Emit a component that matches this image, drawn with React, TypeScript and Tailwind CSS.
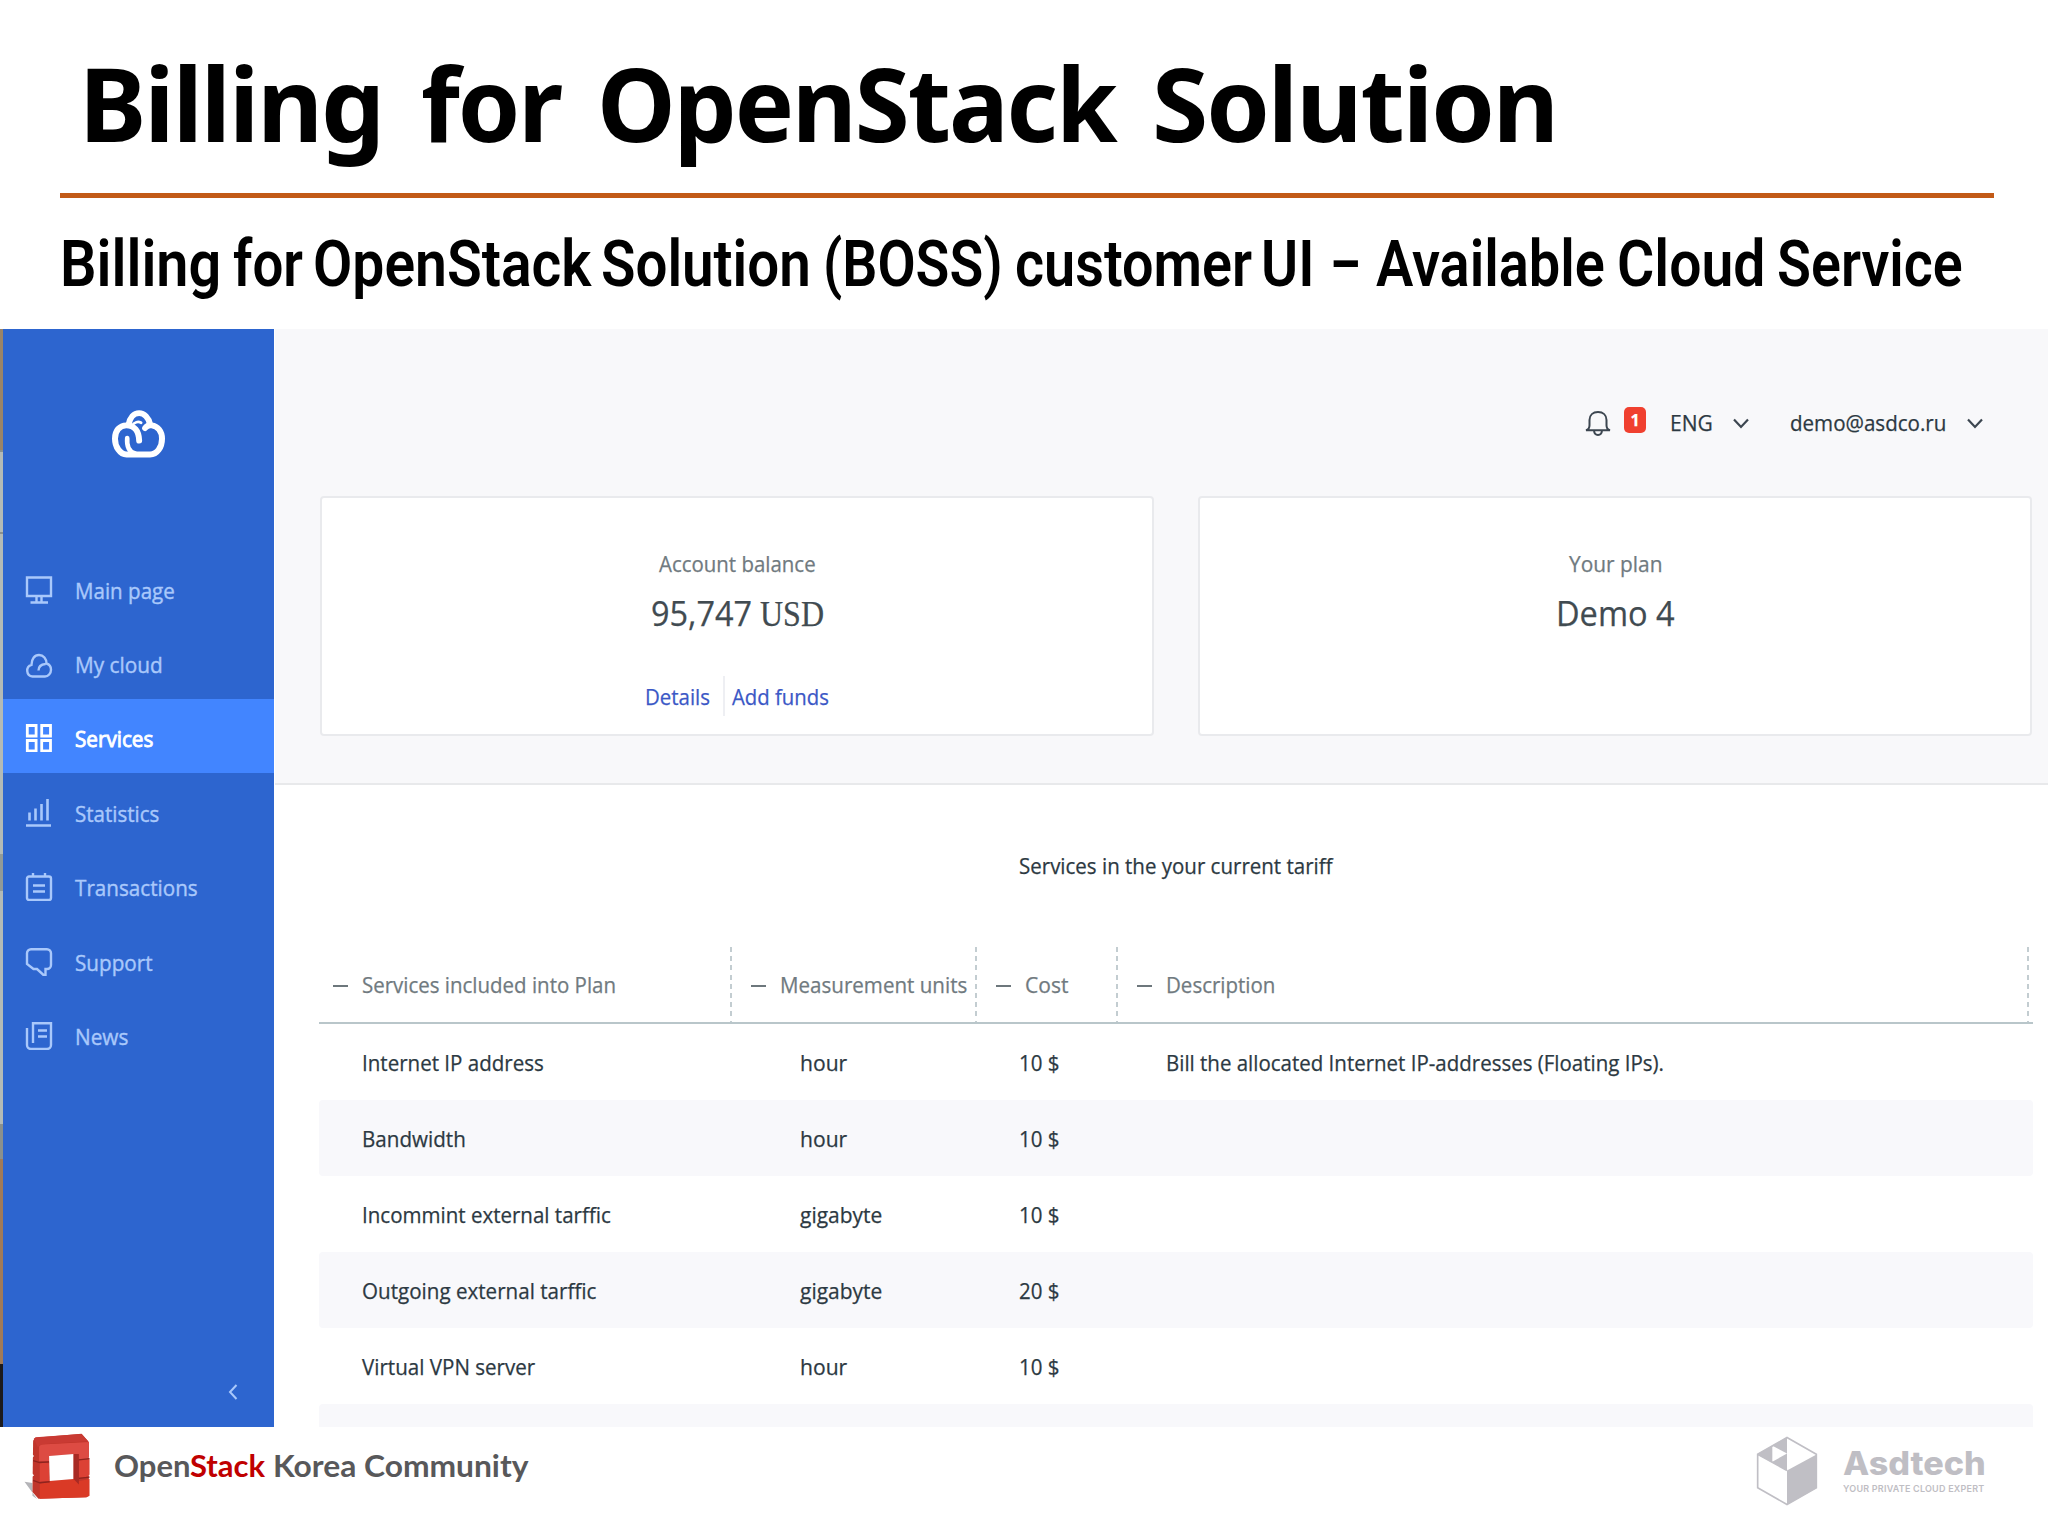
import { ReactNode, useLayoutEffect, useRef, useState } from "react";

// one line of text squeezed or stretched to a fixed width
function Fit({ w, className = "", children }: { w: number; className?: string; children: ReactNode }) {
  const ref = useRef<HTMLSpanElement>(null);
  const [scale, setScale] = useState(1);

  useLayoutEffect(() => {
    if (ref.current) setScale(w / ref.current.offsetWidth);
  }, [w]);

  return (
    <span className={`block whitespace-nowrap ${className}`} style={{ width: w }}>
      <span ref={ref} className="inline-block origin-left" style={{ transform: `scaleX(${scale})` }}>
        {children}
      </span>
    </span>
  );
}

const iconCls = "h-7 w-7 shrink-0 fill-none stroke-current stroke-[2.4]";

const icons = {
  main: (
    <svg viewBox="0 0 28 28" className={iconCls}>
      <path d="M2 1.500h24v18.500H2zM11.500 20v6M16.500 20v6M5.500 26.500h17.500" />
    </svg>
  ),
  cloud: (
    <svg viewBox="0 0 28 28" className={iconCls}>
      <path d="M7.500 26.500a6 6 0 0 1-1-11.700C6.500 9 9.500 5 14 5s7.500 4 7.500 8.500c2.800.8 4.500 3.300 4.500 6.300 0 3.700-2.800 6.700-6 6.700zM13.500 20.500c0-3.500 2.500-6 7-6.500" />
    </svg>
  ),
  services: (
    <svg viewBox="0 0 28 28" className="h-7 w-7 shrink-0 fill-none stroke-current stroke-[2.8]">
      <path d="M2.300 1.500h8.800v10.500H2.300zM16.700 1.500h8.800v10.500H16.700zM2.300 16.500h8.800v10.300H2.300zM16.700 16.500h8.800v10.300H16.700z" />
    </svg>
  ),
  statistics: (
    <svg viewBox="0 0 28 28" className="h-7 w-7 shrink-0 fill-none stroke-current stroke-[2.6]">
      <path d="M4.500 21.500v-8M10.500 21.500v-12M16.500 21.500V5M22.500 21.500V0M1 26.500h25" />
    </svg>
  ),
  transactions: (
    <svg viewBox="0 0 28 28" className={iconCls}>
      <rect x="2" y="3.500" width="24" height="23.500" rx="2" />
      <path d="M8 0v4M20 0v4M8 12.500h12M8 18.500h12" />
    </svg>
  ),
  support: (
    <svg viewBox="0 0 28 28" className={iconCls}>
      <path d="M6 1.200h16a4 4 0 0 1 4 4V17a4 4 0 0 1-4 4h-1.500v6h-2L12 21H8.500L2 16V5.200a4 4 0 0 1 4-4z" />
    </svg>
  ),
  news: (
    <svg viewBox="0 0 28 28" className={iconCls}>
      <path d="M8 21V1.200h18V23a4 4 0 0 1-4 4H6a4 4 0 0 1-4-4V6M13 8.500h9M13 14.500h9" />
    </svg>
  ),
};

const subtitle = [
  { text: "Billing", w: 161, cls: "" },
  { text: "for", w: 70, cls: "ml-[12px]" },
  { text: "OpenStack", w: 278, cls: "ml-[10px]" },
  { text: "Solution", w: 210, cls: "ml-[10px]" },
  { text: "(BOSS)", w: 180, cls: "ml-[12px]" },
  { text: "customer", w: 237, cls: "ml-[12px]" },
  { text: "UI", w: 53, cls: "ml-[9px]" },
  { text: "–", w: 31, cls: "ml-[16px]" },
  { text: "Available", w: 229, cls: "ml-[15px]" },
  { text: "Cloud", w: 148, cls: "ml-[12px]" },
  { text: "Service", w: 186, cls: "ml-[12px]" },
];

const menu = [
  { icon: icons.main, label: "Main page", w: 100 },
  { icon: icons.cloud, label: "My cloud", w: 88 },
  { icon: icons.services, label: "Services", w: 78, active: true },
  { icon: icons.statistics, label: "Statistics", w: 84 },
  { icon: icons.transactions, label: "Transactions", w: 123 },
  { icon: icons.support, label: "Support", w: 78 },
  { icon: icons.news, label: "News", w: 53 },
];

const columns = [
  { label: "Services included into Plan", w: 254, cls: "w-[412px]" },
  { label: "Measurement units", w: 187, cls: "w-[245px] pl-[20px]" },
  { label: "Cost", w: 43, cls: "w-[141px] pl-[20px]" },
  { label: "Description", w: 109, cls: "w-[911px] pl-[20px]" },
];

const rows = [
  { name: "Internet IP address", nameW: 182, unit: "hour", cost: "10 $", text: "Bill the allocated Internet IP-addresses (Floating IPs)." },
  { name: "Bandwidth", nameW: 104, unit: "hour", cost: "10 $" },
  { name: "Incommint external tarffic", nameW: 249, unit: "gigabyte", cost: "10 $" },
  { name: "Outgoing external tarffic", nameW: 234, unit: "gigabyte", cost: "20 $" },
  { name: "Virtual VPN server", nameW: 173, unit: "hour", cost: "10 $" },
];

function Chevron() {
  return (
    <svg viewBox="0 0 18 12" className="h-3 w-[18px] fill-none stroke-[#3c4650] stroke-[2.2]">
      <path d="M2 2.500L9 10l7-7.500" />
    </svg>
  );
}

function CloudLogo() {
  return (
    <svg
      viewBox="36 30 160 144"
      className="h-[48px] w-[53px] fill-none stroke-white stroke-[18]"
      strokeLinecap="round"
      strokeLinejoin="round"
    >
      <path d="M136 84C143 75 152 75 156 76c18 2 31 18 31 40 0 26-15 48-36 48H80c-20 0-35-24-35-48 0-24 14-40 34-40 24 0 38 16 39 46" />
      <path d="M86 74c4-21 16-35 32-35 15 0 29 14 33 34" />
      <path d="M82 114c-2 24 6 42 24 47" strokeWidth="14" />
      <path d="M97 76c6-10 18-13 27-8" strokeWidth="8" />
    </svg>
  );
}

function OpenStackLogo() {
  return (
    <svg viewBox="40 25 210 205" className="ml-[23px] mt-[6px] h-[68px] w-[70px]">
      <path d="M44 172l24 4v38l14 10z" fill="#b4b4b8" />
      <path d="M70 48l6-9 140-12 22 25v160l-8 7-144 4-18-20z" fill="#c0352b" />
      <path d="M88 66q2-5 8-6l142-8v52H194V88l-74 6v16H88z" fill="#dd4b43" />
      <path d="M72 42l6-4 138-10 20 22-140 9-12 8z" fill="#c93a33" />
      <path d="M90 114l28 2v54l-28 2zM208 106l32-2v52l-32 4z" fill="#dc4135" />
      <path d="M90 178l30-8 72-6 18 6 30-6v50l-8 5-142 4z" fill="#da3a26" />
      <path d="M118 94l74-6v76l-72 6z" fill="#fff" />
      <path d="M192 88l16 0v92l-16-16z" fill="#a82a24" />
      <path d="M70 108l20 6 28-2M70 168l20 7 30-3M208 106l32-4M208 162l32-4" className="fill-none stroke-[#8e231e] stroke-[4]" />
      <path d="M66 88l7 6-7 6zM66 146l7 6-7 6zM244 92l-7 6 7 4zM244 148l-7 6 7 4z" fill="#fff" />
    </svg>
  );
}

function AsdtechLogo() {
  return (
    <svg viewBox="168 108 186 209" className="h-[70px] w-[62px]">
      <path d="M171 162l90-51v100z" fill="#c0bfc5" />
      <path d="M217 137l44 23-44 25z" fill="#fff" />
      <path d="M261 211l90-49v101l-90 51z" fill="#c0bfc5" />
      <path d="M173 162l88-50 88 50v101l-88 50-88-50zl88 49" className="fill-none stroke-[#c0bfc5] stroke-[5]" />
    </svg>
  );
}

function Sidebar() {
  return (
    <aside className="flex w-[271px] flex-col bg-[#2d65cf]">
      <div className="flex h-[221px] justify-center pt-[81px]">
        <CloudLogo />
      </div>
      <nav className="flex flex-col text-[#a9c8fb] [-webkit-text-stroke:0.4px]">
        {menu.map((m) => (
          <div
            key={m.label}
            className={`flex h-[74.400px] items-center gap-[22px] pl-[22px] pt-[5px] ${m.active ? "bg-[#4285ff] text-white" : ""}`}
          >
            {m.icon}
            <Fit w={m.w} className={m.active ? "[-webkit-text-stroke:0.9px]" : ""}>
              {m.label}
            </Fit>
          </div>
        ))}
      </nav>
      <svg viewBox="0 0 10 16" className="mt-auto mb-[27px] ml-[225px] h-4 w-[10px] fill-none stroke-[#a9c8fb] stroke-2">
        <path d="M8.500 1L2 8l6.500 7" />
      </svg>
    </aside>
  );
}

function Summary() {
  return (
    <div className="h-[456px] border-b-2 border-[#e8e9eb] bg-[#f8f8fa]">
      <div className="flex h-[167px] items-center pl-[1310px] pt-[20px]">
        <svg viewBox="0 0 26 26" className="h-[26px] w-[26px] fill-none stroke-[#3c4650] stroke-2">
          <path d="M1 20.200c2.500-.7 3.500-2.500 3.500-5V10C4.500 5 8 2 13 2s8.500 3 8.500 8v5.200c0 2.500 1 4.300 3.500 5zM9 20.500c.5 6 7.500 6 8 0" />
        </svg>
        <span className="-mt-[5px] ml-[13px] flex h-[26px] w-[22px] items-center justify-center rounded-[5px] bg-[#f0402f] text-base font-bold text-white">
          1
        </span>
        <Fit w={43} className="-mt-px ml-[24px]">ENG</Fit>
        <div className="ml-[19px]"><Chevron /></div>
        <Fit w={156} className="-mt-px ml-10">demo@asdco.ru</Fit>
        <div className="ml-[20px]"><Chevron /></div>
      </div>
      <div className="flex gap-[44px] pl-[45px]">
        <div className="flex h-[240px] w-[834px] flex-col items-center rounded border-2 border-[#e9eaed] bg-white pt-[50px]">
          <Fit w={157} className="text-[#707a80]">Account balance</Fit>
          <div className="mt-[12px] flex items-baseline gap-[8px] text-[35px] leading-[46px] text-[#414b51]">
            <Fit w={101}>95,747</Fit>
            <Fit w={64} className="font-['Liberation_Serif',serif] text-[36px]">USD</Fit>
          </div>
          <div className="mt-[43px] flex items-center text-[#3b58c6]">
            <Fit w={65}>Details</Fit>
            <span className="ml-[13px] mr-[7px] -my-1 h-10 w-[2px] bg-[#eeeff3]" />
            <Fit w={97}>Add funds</Fit>
          </div>
        </div>
        <div className="flex h-[240px] w-[834px] flex-col items-center rounded border-2 border-[#e9eaed] bg-white pt-[50px]">
          <Fit w={93} className="text-[#707a80]">Your plan</Fit>
          <Fit w={119} className="mt-[12px] text-[35px] leading-[46px] text-[#414b51]">Demo 4</Fit>
        </div>
      </div>
    </div>
  );
}

function ServicesTable() {
  return (
    <div className="ml-[44px] w-[1714px]">
      <div className="flex h-[77px] border-b-2 border-[#b9c6ca] text-[#707a80]">
        {columns.map((c) => (
          <div key={c.label} className={`flex ${c.cls} first:pl-[14px]`}>
            <div className="mt-[38px] h-[2px] w-[15px] shrink-0 bg-[#6d777c]" />
            <Fit w={c.w} className="ml-[14px] mt-[22px]">{c.label}</Fit>
            <div className="-mr-px ml-auto w-[2px] bg-[repeating-linear-gradient(to_bottom,#c3cdd1_0_5px,transparent_5px_9.200px)]" />
          </div>
        ))}
      </div>
      {rows.map((r) => (
        <div key={r.name} className="flex h-[76px] items-center rounded pl-[43px] even:bg-white odd:bg-[#f8f8fb]">
          <div className="w-[438px]"><Fit w={r.nameW}>{r.name}</Fit></div>
          <div className="w-[219px]"><Fit w={r.unit === "hour" ? 47 : 82}>{r.unit}</Fit></div>
          <div className="w-[147px]"><Fit w={40}>{r.cost}</Fit></div>
          {r.text && <Fit w={498}>{r.text}</Fit>}
        </div>
      ))}
      <div className="h-[23px] rounded-t bg-[#f8f8fb]" />
    </div>
  );
}

export default function App() {
  return (
    <div className="flex h-[1536px] w-[2048px] flex-col overflow-hidden bg-white font-['Open_Sans',sans-serif] text-[22px] leading-[30px] text-[#2c3942]">
      <header className="h-[329px] text-black">
        <h1 className="flex h-[193px] pl-[79px] pt-[31px] font-['Noto_Sans',sans-serif] text-[103px] font-bold leading-[142px] tracking-[-0.02em]">
          <Fit w={304}>Billing</Fit>
          <Fit w={140} className="ml-[38px]">for</Fit>
          <Fit w={519} className="ml-[36px]">OpenStack</Fit>
          <Fit w={405} className="ml-[36px]">Solution</Fit>
        </h1>
        <div className="ml-[60px] h-[5px] w-[1934px] bg-[#c25a17]" />
        <div className="ml-[60px] mt-[27px] flex font-['Roboto',sans-serif] text-[64px] font-semibold leading-[80px]">
          {subtitle.map((s) => (
            <Fit key={s.text} w={s.w} className={s.cls}>{s.text}</Fit>
          ))}
        </div>
      </header>

      <main className="flex h-[1098px] overflow-hidden [-webkit-text-stroke:0.25px]">
        <div className="w-[3px] bg-[linear-gradient(#9a8468_0_121px,#8a908d_121px_123px,#b3bab6_123px_203px,#8a908d_203px_205px,#b3bab6_205px_525px,#929a97_525px_562px,#b3bab6_562px_795px,#8a908d_795px_830px,#a07a58_830px_1035px,#1c1a1c_1035px)]" />
        <Sidebar />
        <div className="ml-px flex-1">
          <Summary />
          <Fit w={314} className="ml-[744px] mt-[65px] mb-[67px]">Services in the your current tariff</Fit>
          <ServicesTable />
        </div>
      </main>

      <footer className="flex flex-1 items-start">
        <OpenStackLogo />
        <div className="ml-[21px] mt-[18px] flex font-['Lato',sans-serif] text-[31px] font-bold leading-[40px] text-[#58585a]">
          <Fit w={76}>Open</Fit>
          <Fit w={75} className="text-[#c00000]">Stack</Fit>
          <Fit w={256} className="ml-[8px]">Korea Community</Fit>
        </div>
        <div className="ml-auto mr-[62px] mt-[9px] flex font-['Inter',sans-serif] text-[#bfbec4]">
          <AsdtechLogo />
          <div className="ml-[25px] mt-[9px]">
            <Fit w={143} className="text-[32px] font-extrabold leading-[38px]">Asdtech</Fit>
            <Fit w={141} className="text-[9.500px] font-semibold leading-[12px] tracking-wide">YOUR PRIVATE CLOUD EXPERT</Fit>
          </div>
        </div>
      </footer>
    </div>
  );
}
